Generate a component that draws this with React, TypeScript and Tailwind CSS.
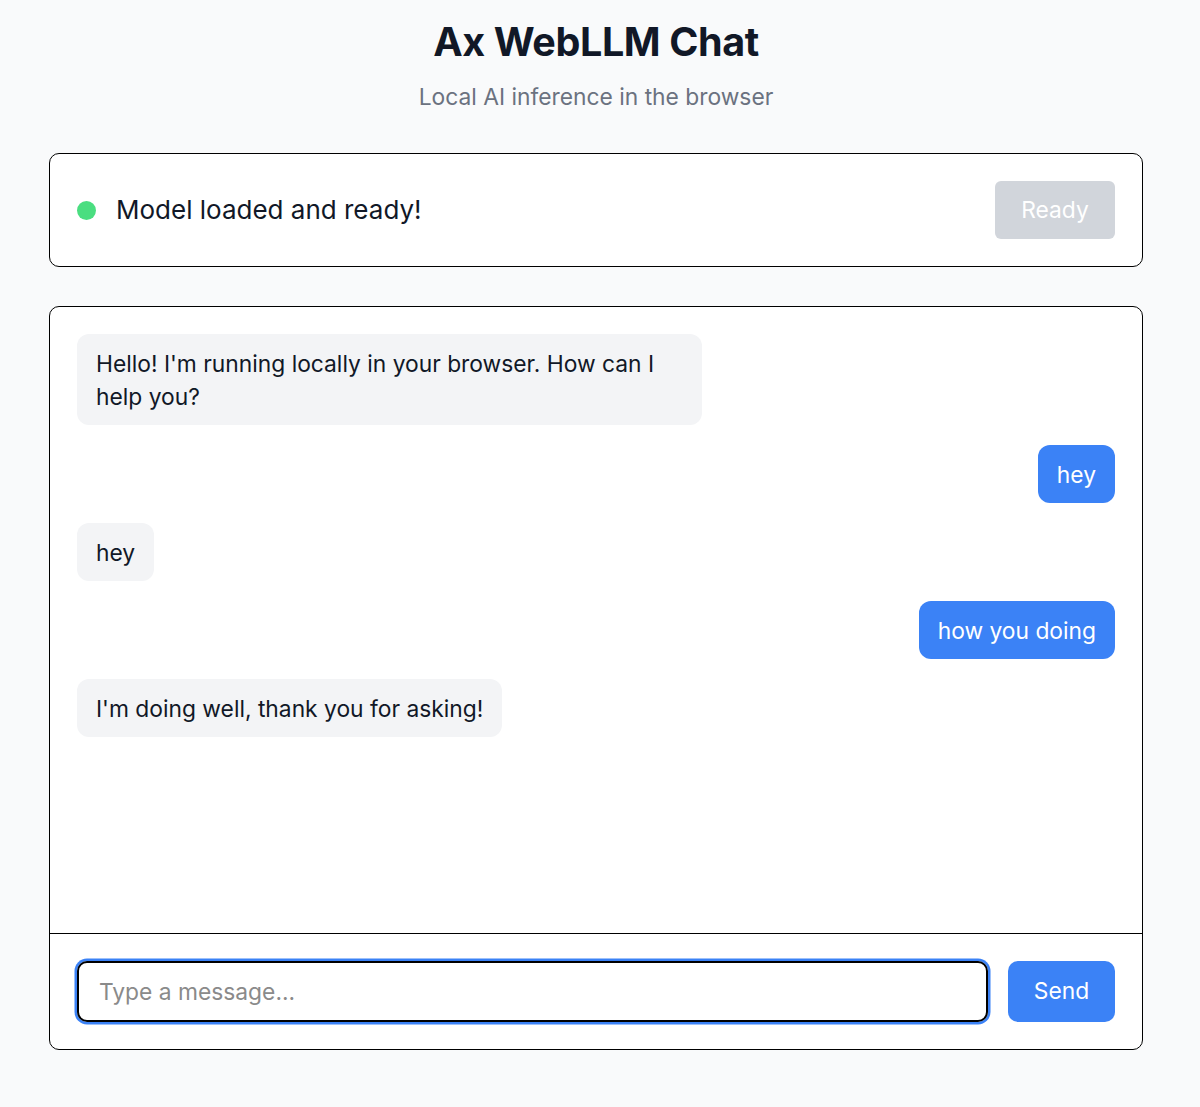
import { useState } from 'react';

type Message = { role: 'user' | 'assistant'; content: string };

const initialMessages: Message[] = [
  { role: 'assistant', content: "Hello! I'm running locally in your browser. How can I help you?" },
  { role: 'user', content: 'hey' },
  { role: 'assistant', content: 'hey' },
  { role: 'user', content: 'how you doing' },
  { role: 'assistant', content: "I'm doing well, thank you for asking!" },
];

export default function App() {
  const [messages] = useState<Message[]>(initialMessages);
  const [input, setInput] = useState('');

  return (
    <div className="min-h-[1107px] bg-[#f9fafb] font-['Inter',sans-serif] text-[#111827]">
      <div className="ml-[49px] w-[1094px] pt-[19px]">
        <h1 className="text-center text-[39.5px] leading-[46px] font-bold tracking-[-0.01em] text-[#111827]">Ax WebLLM Chat</h1>
        <p className="mt-[16px] text-center text-[22.8px] leading-[32px] text-[#6b7280]">Local AI inference in the browser</p>

        <div className="mt-[40px] flex h-[114px] items-center justify-between rounded-[10px] border-[1.5px] border-black bg-white pr-[27px] pl-[27px]">
          <div className="flex items-center gap-[20px]">
            <span className="h-[19px] w-[19px] rounded-full bg-[#4ade80]" />
            <span className="text-[26px] leading-[34px]">Model loaded and ready!</span>
          </div>
          <button disabled className="h-[58px] w-[120px] rounded-[6px] bg-[#d1d5db] text-[22.8px] text-white">
            Ready
          </button>
        </div>

        <div className="mt-[39px] flex flex-col rounded-[10px] border-[1.5px] border-black bg-white">
          <div className="flex h-[626px] flex-col gap-[20px] overflow-y-auto p-[27px]">
            {messages.map((m, i) => (
              <div key={i} className={m.role === 'user' ? 'flex justify-end' : 'flex justify-start'}>
                <div
                  className={
                    m.role === 'user'
                      ? 'max-w-[625px] rounded-[12px] bg-[#3b82f6] px-[19px] py-[12.5px] text-[22.8px] leading-[33px] text-white'
                      : 'max-w-[625px] rounded-[12px] bg-[#f3f4f6] px-[19px] py-[12.5px] text-[22.8px] leading-[33px] text-[#111827]'
                  }
                >
                  {m.content}
                </div>
              </div>
            ))}
          </div>
          <div className="flex items-center gap-[20px] border-t-[1.5px] border-black p-[27px]">
            <input
              autoFocus
              value={input}
              onChange={(e) => setInput(e.target.value)}
              placeholder="Type a message..."
              className="h-[61px] flex-1 rounded-[10px] border-2 border-black px-[20px] text-[22.8px] text-[#111827] ring-[2.5px] ring-[#3b82f6] outline-none placeholder:text-[#8a8a8a]"
            />
            <button className="h-[61px] w-[107px] rounded-[10px] bg-[#3b82f6] text-[22.8px] text-white">Send</button>
          </div>
        </div>
      </div>
    </div>
  );
}
